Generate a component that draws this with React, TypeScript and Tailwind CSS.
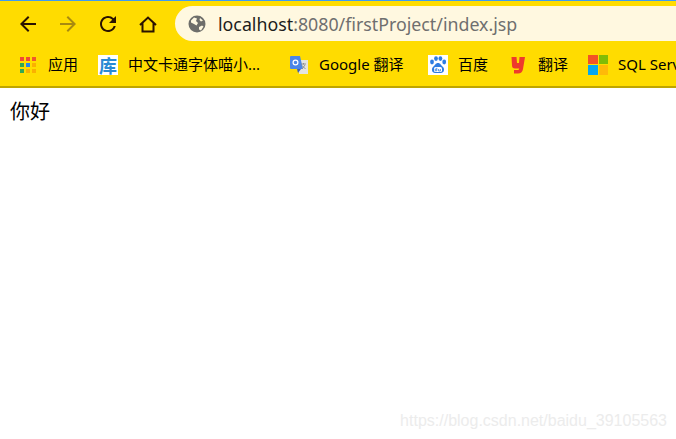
const font = "font-['Noto_Sans','Noto_Sans_CJK_SC',sans-serif]";

const AppsIcon = () => {
  const colors = [
    "#ef4b36", "#ef4b36", "#f0592b",
    "#34a853", "#2b86e8", "#fbb000",
    "#34a853", "#fbb000", "#fbb000",
  ];
  return (
    <div className="grid grid-cols-3 gap-[2px] w-4 h-4">
      {colors.map((c, i) => (
        <span key={i} className="w-1 h-1" style={{ backgroundColor: c }} />
      ))}
    </div>
  );
};

const KuIcon = () => (
  <div className="w-5 h-5 bg-white flex items-center justify-center">
    <span className="text-[18px] leading-5 font-bold text-[#2a8ad4] font-['Noto_Sans_CJK_SC',sans-serif]">库</span>
  </div>
);

const GoogleIcon = () => (
  <svg width="20" height="20" viewBox="0 0 20 20">
    <path d="M10 5h9v14h-9z" fill="#e4e4e0" />
    <path d="M1 2a1 1 0 0 1 1-1h9l3 13H2a1 1 0 0 1-1-1z" fill="#4a86e8" />
    <path d="M8 14h4l-3 4z" fill="#3c5fb8" />
    <circle cx="6.5" cy="7.5" r="2.4" fill="none" stroke="#fff" strokeWidth="1.2" />
    <path d="M12 9h5M14.5 8v1.5M13 14l3-4M13 10.5l3.5 3.5" stroke="#8a8a8a" strokeWidth="0.9" fill="none" />
  </svg>
);

const BaiduIcon = () => (
  <svg width="20" height="20" viewBox="0 0 20 20" className="bg-white">
    <ellipse cx="4" cy="7" rx="1.9" ry="2.4" fill="#2f7de1" />
    <ellipse cx="8" cy="3.6" rx="1.9" ry="2.4" fill="#2f7de1" />
    <ellipse cx="12.4" cy="3.6" rx="1.9" ry="2.4" fill="#2f7de1" />
    <ellipse cx="16.2" cy="7" rx="1.9" ry="2.4" fill="#2f7de1" />
    <path d="M10 8c2.5 0 3 2.4 5 4 2 2 1 6-2 6H7c-3 0-4-4-2-6 2-1.6 2.500-4 5-4z" fill="#2f7de1" />
    <rect x="6" y="12" width="8" height="5" rx="1.500" fill="#fff" />
    <path d="M8.800 12.800v3h-1.600v-1.700h1.600M10.600 14v2h1.800v-2" stroke="#2f7de1" strokeWidth="0.8" fill="none" />
  </svg>
);

const YoudaoIcon = () => (
  <svg width="20" height="20" viewBox="0 0 20 20">
    <path d="M3.500 2h5l.5 6h2l.5-6h5.500l-2 12c-.4 3-2.500 4.500-5 4.500H6v-3.500h3.500c1 0 1.500-.5 1.700-1.500H7c-2 0-3-1-3-3z" fill="#ee3a2c" />
  </svg>
);

const WindowsIcon = () => (
  <div className="grid grid-cols-2 gap-px w-5 h-5">
    <span className="bg-[#f35325]" />
    <span className="bg-[#81bc06]" />
    <span className="bg-[#05a6f0]" />
    <span className="bg-[#ffba08]" />
  </div>
);

const bookmarks = [
  { icon: <KuIcon />, label: "中文卡通字体喵小...", width: "w-[191px]" },
  { icon: <GoogleIcon />, label: "Google 翻译", width: "w-[139px]" },
  { icon: <BaiduIcon />, label: "百度", width: "w-[80px]" },
  { icon: <YoudaoIcon />, label: "翻译", width: "w-[80px]" },
  { icon: <WindowsIcon />, label: "SQL Server", width: "w-[110px]" },
];

export default function App() {
  return (
    <div className={`w-[676px] h-[439px] bg-white overflow-hidden flex flex-col ${font}`}>
      {/* Browser chrome */}
      <div className="shrink-0 bg-[#ffdc00] h-[88px] border-t border-[#3e9cf2] border-b-2 border-b-[#bfa500]">
        <div className="flex items-center h-[45px]">
          <div className="flex items-center gap-4 pl-4 w-[175px]">
            <svg width="24" height="24" viewBox="0 0 24 24" fill="#2a1200">
              <path d="M20 11H7.830l5.590-5.590L12 4l-8 8 8 8 1.410-1.410L7.830 13H20v-2z" />
            </svg>
            <svg width="24" height="24" viewBox="0 0 24 24" fill="#a88a10">
              <path d="M12 4l-1.410 1.410L16.170 11H4v2h12.170l-5.580 5.590L12 20l8-8z" />
            </svg>
            <svg width="24" height="24" viewBox="0 0 24 24" fill="#2a1200">
              <path d="M17.650 6.350A7.958 7.958 0 0 0 12 4c-4.420 0-7.990 3.580-7.990 8s3.570 8 7.990 8c3.730 0 6.840-2.550 7.730-6h-2.080A5.990 5.990 0 0 1 12 18c-3.310 0-6-2.690-6-6s2.690-6 6-6c1.660 0 3.140.69 4.220 1.780L13 11h7V4l-2.350 2.350z" />
            </svg>
            <svg width="24" height="24" viewBox="0 0 24 24" fill="none" stroke="#2a1200" strokeWidth="2">
              <path d="M4 13l8-7.500 8 7.500M6.500 11v8.500h11V11" />
            </svg>
          </div>
          <div className="flex-1 h-[35px] bg-[#fff8e0] rounded-l-full flex items-center pl-[13px] gap-[12px]">
            <svg width="18" height="18" viewBox="0 0 18 18">
              <circle cx="9" cy="9" r="8.500" fill="#6e6e6a" />
              <path d="M3 5.500l3-3 3 1-1 2.500 2 2-1.500 2.500L6 9 3 7.500zM11 12l3-1.500 1.500 1-2.500 4-2-1zM12 3l3 2.500-2 1-1.500-1.500z" fill="#fff8e0" />
            </svg>
            <div className="text-[17.8px] leading-[24px] whitespace-nowrap text-[#6f6f6f]">
              <span className="text-[#1c1c1c]">localhost</span>:8080/firstProject/index.jsp
            </div>
          </div>
        </div>
        <div className="flex items-center h-[37px] pl-[20px] text-[15px] text-black whitespace-nowrap">
          <div className="flex items-center gap-[12px] w-[78px] shrink-0">
            <AppsIcon />
            <span>应用</span>
          </div>
          {bookmarks.map((b) => (
            <div key={b.label} className={`flex items-center gap-[10px] shrink-0 ${b.width}`}>
              {b.icon}
              <span>{b.label}</span>
            </div>
          ))}
        </div>
      </div>
      {/* Page */}
      <div className="relative flex-1 px-[10px] pt-[10px]">
        <p className="text-[20px] leading-[28px] text-black">你好</p>
        <span className="absolute right-[9px] bottom-[9px] font-['Liberation_Sans',sans-serif] text-[16px] leading-[18px] text-[#ececec]">
          https://blog.csdn.net/baidu_39105563
        </span>
      </div>
    </div>
  );
}
